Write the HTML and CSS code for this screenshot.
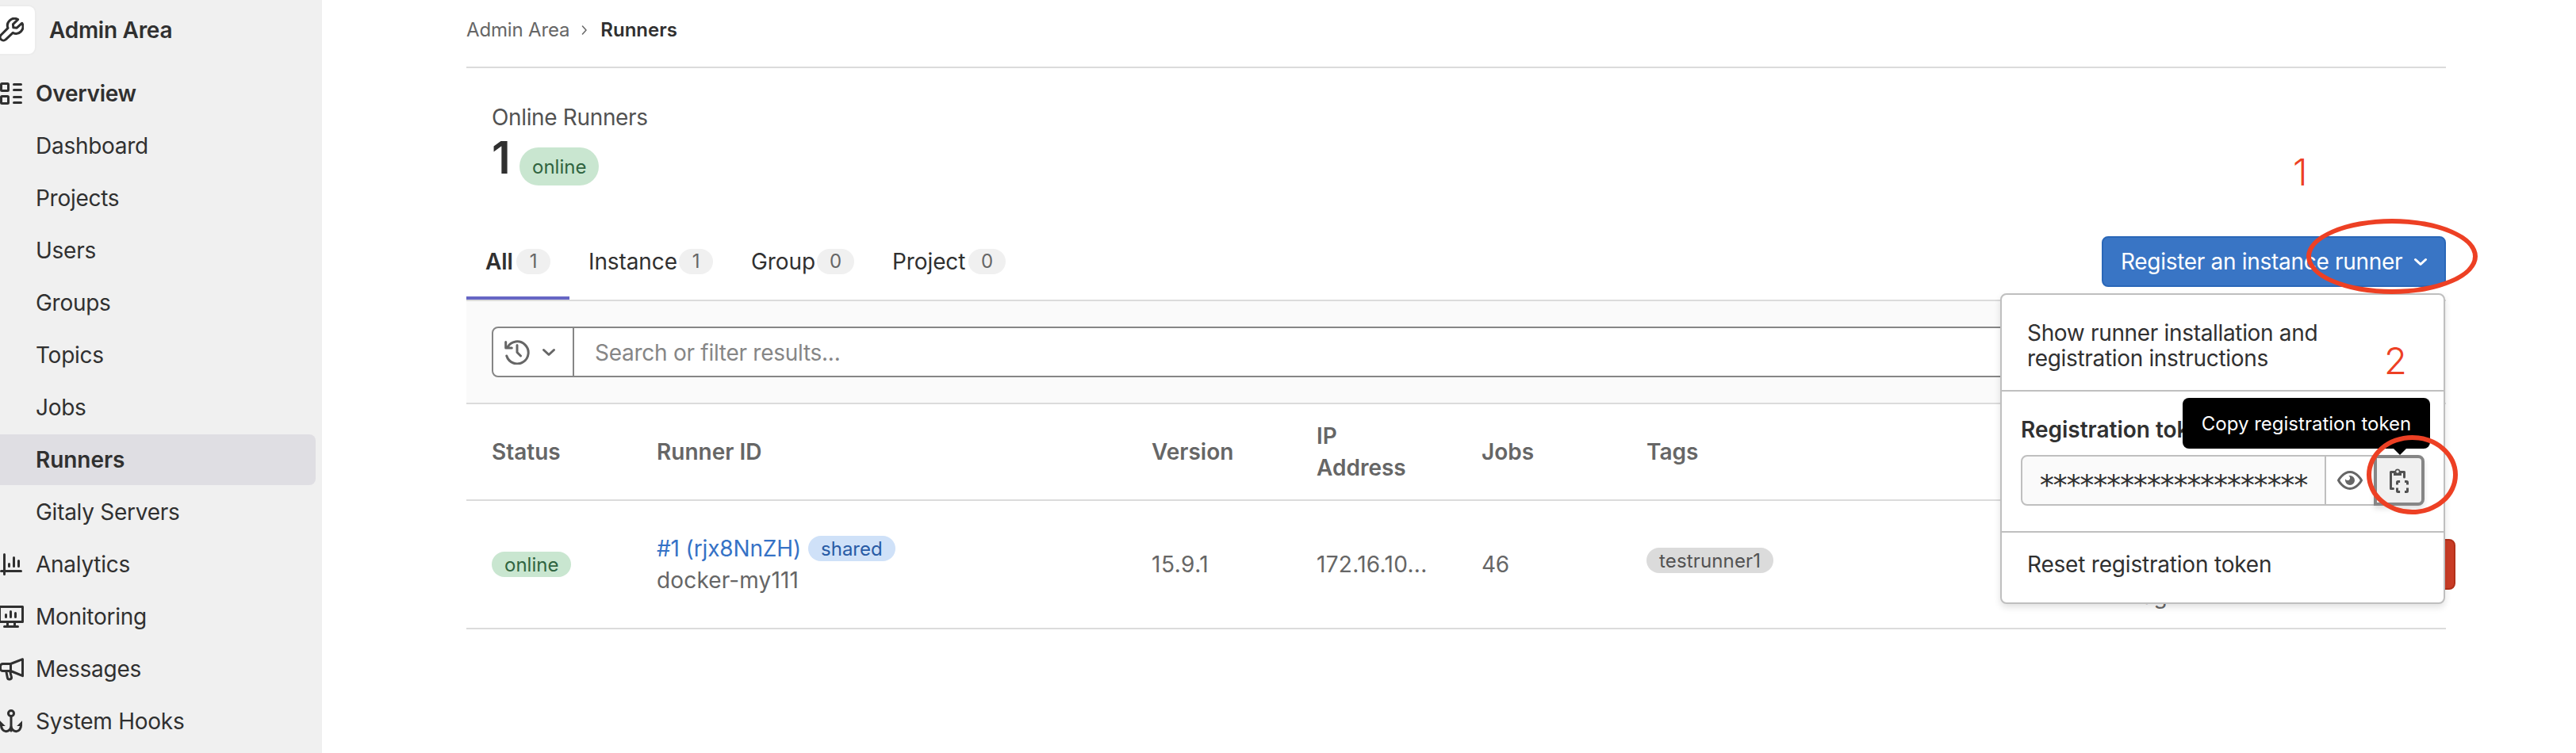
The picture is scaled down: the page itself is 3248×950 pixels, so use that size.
FILE: index.html
```html
<!DOCTYPE html>
<html lang="en">
<head>
    <meta charset="UTF-8">
    <meta name="viewport" content="width=device-width, initial-scale=1.0">
    <title>Runners · Admin Area</title>
    <link rel="stylesheet" href="styles.css">
</head>
<body>
    <aside class="sidebar">
        <div class="context-header">
            <span class="avatar">
                <svg class="icon" viewBox="0 0 16 16"><path d="M12.3 1.3A4.4 4.4 0 0 0 6 6.7L1.7 11a2.05 2.05 0 0 0 2.9 2.9L9.1 9.7A4.4 4.4 0 0 0 14.9 3.6L11.6 6.6 9.4 6.4 9.2 4.3z"/></svg>
            </span>
            <span class="context-title">Admin Area</span>
        </div>
        <nav class="nav">
            <a class="nav-item bold">
                <svg class="icon" viewBox="0 0 16 16"><rect x="1.75" y="1.75" width="4.5" height="4.5" rx=".5"/><rect x="1.75" y="9.75" width="4.5" height="4.5" rx=".5"/><path d="M9.75 2.25h4.5M9.75 5.75h4.5M9.75 10.25h4.5M9.75 13.75h4.5"/></svg>
                <span>Overview</span>
            </a>
            <a class="nav-item sub">Dashboard</a>
            <a class="nav-item sub">Projects</a>
            <a class="nav-item sub">Users</a>
            <a class="nav-item sub">Groups</a>
            <a class="nav-item sub">Topics</a>
            <a class="nav-item sub">Jobs</a>
            <a class="nav-item sub bold active">Runners</a>
            <a class="nav-item sub">Gitaly Servers</a>
            <a class="nav-item">
                <svg class="icon" viewBox="0 0 16 16"><path d="M3.75 1.75v12.5M1.75 12.25h12.5M6.75 7.75v1.5M9.75 3.75v5.5M12.75 5.75v3.5"/></svg>
                <span>Analytics</span>
            </a>
            <a class="nav-item">
                <svg class="icon" viewBox="0 0 16 16"><path d="M.75 1.75h14.5v9.5H.75zM5.75 11.5V14M10.25 11.5V14M3.75 14.25h8.5M4.75 6.75v1.5M7.75 4.75v3.5M10.75 5.75v2.5"/></svg>
                <span>Monitoring</span>
            </a>
            <a class="nav-item">
                <svg class="icon" viewBox="0 0 16 16"><path d="M7.75 4.75h-5a1.5 1.5 0 0 0-1.5 1.5v1.5a1.5 1.5 0 0 0 1.5 1.5h5zM7.75 4.75l7.5-2.9v10.5l-7.5-3.1M4.9 9.5l.8 4a1.2 1.2 0 0 0 2.5-.5l-.9-3.5"/></svg>
                <span>Messages</span>
            </a>
            <a class="nav-item">
                <svg class="icon" viewBox="0 0 16 16"><circle cx="8" cy="3" r="1.75"/><path d="M8 5v9M1.75 10.5a3.125 3.75 0 0 0 6.25.3 3.125 3.75 0 0 0 6.25-.3"/><path class="solid" d="M1 7.6L4.4 11H1zM15 7.6L11.6 11H15z"/></svg>
                <span>System Hooks</span>
            </a>
        </nav>
    </aside>

    <main class="content">
        <div class="breadcrumbs">
            <span>Admin Area</span>
            <svg class="crumb-arrow" viewBox="0 0 8 12"><path d="M1.5 1L6 6l-4.5 5"/></svg>
            <b>Runners</b>
        </div>

        <section class="stats">
            <div class="stat-title">Online Runners</div>
            <div class="stat-row">
                <span class="stat-value">1</span>
                <span class="badge success large">online</span>
            </div>
        </section>

        <div class="tabs">
            <a class="tab tab-all selected">All <span class="count">1</span></a>
            <a class="tab tab-instance">Instance <span class="count">1</span></a>
            <a class="tab tab-group">Group <span class="count wide">0</span></a>
            <a class="tab tab-project">Project <span class="count wide">0</span></a>

            <div class="register">
                <button class="register-btn">
                    <span>Register an instance runner</span>
                    <svg class="chevron" viewBox="0 0 16 9"><path d="M1.5 1.5L8 7.5l6.5-6"/></svg>
                </button>
                <div class="dropdown">
                    <a class="dropdown-item install">Show runner installation and<br>registration instructions</a>
                    <div class="token">
                        <label class="token-label">Registration token</label>
                        <div class="token-group">
                            <span class="token-value">********************</span>
                            <span class="token-eye">
                                <svg class="icon" viewBox="0 0 16 16"><path d="M.75 8S3.5 2.75 8 2.75 15.25 8 15.25 8 12.5 13.25 8 13.25.75 8 .75 8z"/><path class="solid" d="M8 5a3 3 0 1 1-3 3c0-.3.05-.6.15-.9A1.5 1.5 0 1 0 7.1 5.15 3 3 0 0 1 8 5z"/></svg>
                            </span>
                            <button class="token-copy">
                                <svg class="icon" viewBox="0 0 16 16"><path d="M4.5 2.75H2.75v10.5h1.5M9.5 2.75h1.75V6"/><path class="solid" d="M4.5 5V2h.8a1.8 1.8 0 0 1 3.4 0h.8v3z"/><circle class="hole" cx="7" cy="2.5" r=".9"/><path class="dash" d="M6.75 10.8V9.25q0-.5.5-.5h1.3M11.5 8.75h1.25q.5 0 .5.5v1.55M13.25 12.8v1.95q0 .5-.5.5H11.5M8.55 15.25h-1.3q-.5 0-.5-.5V12.8"/></svg>
                            </button>
                        </div>
                        <div class="tooltip">Copy registration token</div>
                    </div>
                    <a class="dropdown-item">Reset registration token</a>
                </div>
            </div>
        </div>

        <div class="filter-bar">
            <div class="search">
                <span class="history">
                    <svg class="icon" viewBox="0 0 16 16"><path d="M1.4 10.5a7 7 0 1 0 .6-5.5M.85 1.7v3.8h3.8M8 3.75v4.5l2.25 2.25"/></svg>
                    <svg class="chevron" viewBox="0 0 16 9"><path d="M1.5 1.5L8 7.5l6.5-6"/></svg>
                </span>
                <span class="search-input">Search or filter results...</span>
            </div>
        </div>

        <div class="runner-table">
            <div class="row head">
                <div>Status</div>
                <div>Runner ID</div>
                <div>Version</div>
                <div>IP Address</div>
                <div>Jobs</div>
                <div>Tags</div>
            </div>
            <div class="row body">
                <div><span class="badge success">online</span></div>
                <div>
                    <div class="runner-name"><a class="link">#1 (rjx8NnZH)</a><span class="badge info">shared</span></div>
                    <div class="runner-desc">docker-my111</div>
                </div>
                <div class="num">15.9.1</div>
                <div class="num ip">172.16.10...</div>
                <div>46</div>
                <div><span class="badge neutral">testrunner1</span></div>
                <div class="contact">ago</div>
                <div class="actions"><button class="delete-btn"></button></div>
            </div>
        </div>
    </main>

    <!-- step markers -->
    <span class="mark mark-1">1</span>
    <span class="mark mark-2">2</span>
    <span class="ring ring-1"></span>
    <span class="ring ring-2"></span>
</body>
</html>
```

FILE: styles.css
```css
* {
    box-sizing: border-box;
}

body {
    margin: 0;
    position: relative;
    display: flex;
    width: 3248px;
    height: 950px;
    overflow: hidden;
    background-color: #ffffff;
    color: #303030;
    font-family: Inter, "Noto Sans", sans-serif;
    font-size: 28px;
    line-height: 40px;
    letter-spacing: -0.27px;
}

button {
    font: inherit;
    letter-spacing: inherit;
    margin: 0;
    padding: 0;
}

.icon {
    display: block;
    flex: none;
    width: 32px;
    height: 32px;
}

.icon,
.chevron,
.crumb-arrow {
    fill: none;
    stroke: currentColor;
    stroke-width: 1.5;
    stroke-linecap: round;
    stroke-linejoin: round;
}

.icon .solid {
    fill: currentColor;
    stroke: none;
}

.icon .hole {
    fill: #f0f0f0;
    stroke: none;
}

.icon .dash {
    stroke-linecap: butt;
}

.chevron {
    flex: none;
    width: 16px;
    height: 9px;
    stroke-width: 3;
    overflow: visible;
}

/* Sidebar */
.sidebar {
    flex: none;
    width: 406px;
    padding-top: 8px;
    background-color: #f0f0f0;
    overflow: hidden;
}

.context-header {
    display: flex;
    align-items: center;
    height: 60px;
    margin-bottom: 18px;
    font-weight: 600;
}

.avatar {
    width: 62px;
    height: 60px;
    margin-left: -18px;
    padding: 14px 0 0 16px;
    border-radius: 8px;
    background-color: #ffffff;
    box-shadow: 0 0 0 2px #ececec;
}

.context-title {
    margin-left: 18px;
}

.nav {
    display: flex;
    flex-direction: column;
    gap: 2px;
}

.nav-item {
    display: flex;
    align-items: center;
    gap: 15px;
    width: 398px;
    height: 64px;
    border-radius: 0 8px 8px 0;
}

.nav-item .icon {
    margin-left: -2px;
}

.nav-item.sub {
    padding-left: 45px;
}

.bold {
    font-weight: 600;
}

.nav-item.active {
    background-color: #dfdee3;
    letter-spacing: -0.06px;
}

/* Content */
.content {
    flex: none;
    width: 2496px;
    margin-left: 182px;
}

.breadcrumbs {
    display: flex;
    align-items: center;
    height: 86px;
    padding-bottom: 9px;
    border-bottom: 2px solid #dbdbdb;
    color: #666666;
    font-size: 24px;
    letter-spacing: -0.16px;
}

.breadcrumbs b {
    color: #303030;
    font-weight: 600;
    letter-spacing: 0;
}

.crumb-arrow {
    width: 8px;
    height: 12px;
    margin: 0 16px 0 15px;
}

.stats {
    height: 196px;
    padding: 42px 32px 0;
}

.stat-title {
    color: #525252;
    letter-spacing: -0.35px;
}

.stat-row {
    display: flex;
    align-items: flex-start;
}

.stat-value {
    width: 35px;
    font-size: 56px;
    font-weight: 600;
    line-height: 62px;
    letter-spacing: 0;
}

.badge {
    display: inline-block;
    height: 32px;
    padding: 0 16px;
    border-radius: 16px;
    font-size: 24px;
    line-height: 33px;
    letter-spacing: 0;
}

.badge.success {
    background-color: #c9e6d0;
    color: #306440;
}

.badge.info {
    margin-left: 9px;
    background-color: #cfe1f8;
    color: #285ba5;
}

.badge.neutral {
    background-color: #dbdbdb;
    color: #525252;
    letter-spacing: 0.15px;
}

.badge.large {
    height: 48px;
    margin-top: 18px;
    border-radius: 24px;
    line-height: 49px;
}

/* Tabs */
.tabs {
    display: flex;
    height: 98px;
    border-bottom: 2px solid #dbdbdb;
}

.tab {
    display: flex;
    align-items: center;
    justify-content: space-between;
    padding: 4px 24px 0;
    border-bottom: 4px solid transparent;
    letter-spacing: -0.1px;
}

.tab-all {
    width: 130px;
}

.tab-instance {
    width: 205px;
}

.tab-group {
    width: 178px;
}

.tab-project {
    width: 191px;
}

.tab.selected {
    border-bottom-color: #6666c4;
    font-weight: 600;
}

.count {
    width: 43px;
    height: 32px;
    border-radius: 16px;
    background-color: #f0f0f0;
    color: #666666;
    font-size: 24px;
    font-weight: 400;
    line-height: 32px;
    text-align: center;
}

.count.wide {
    width: 47px;
}

/* Register dropdown */
.register {
    position: relative;
    margin: 16px 0 0 auto;
}

.register-btn {
    display: flex;
    align-items: center;
    justify-content: space-between;
    width: 434px;
    height: 64px;
    padding: 0 22px;
    border: 2px solid #2a67b8;
    border-radius: 8px;
    background-color: #3975c5;
    color: #ffffff;
    letter-spacing: -0.3px;
}

.dropdown {
    position: absolute;
    top: 72px;
    right: 1px;
    z-index: 2;
    width: 561px;
    height: 392px;
    border: 2px solid #bfbfbf;
    border-radius: 8px;
    background-color: #ffffff;
    box-shadow: 0 4px 8px rgba(0, 0, 0, 0.12);
}

.dropdown-item {
    display: block;
    padding: 20px 32px;
    line-height: 40px;
    letter-spacing: -0.2px;
}

.dropdown-item.install {
    height: 120px;
    padding-top: 32px;
    line-height: 32px;
    letter-spacing: -0.33px;
}

.token {
    position: relative;
    height: 180px;
    padding: 26px 24px 0;
    border-top: 2px solid #bfbfbf;
    border-bottom: 2px solid #bfbfbf;
}

.token-label {
    display: block;
    height: 54px;
    line-height: 44px;
    font-weight: 600;
    letter-spacing: 0;
}

.token-group {
    display: flex;
    width: 509px;
    height: 64px;
}

.token-value {
    width: 385px;
    padding-left: 20px;
    border: 2px solid #bfbfbf;
    border-radius: 8px 0 0 8px;
    background-color: #fafafa;
    font-family: "DejaVu Sans Mono", monospace;
    font-size: 36px;
    line-height: 72px;
    letter-spacing: -4.81px;
}

.token-eye {
    width: 60px;
    padding: 14px 0 0 14px;
    border-top: 2px solid #bfbfbf;
    border-bottom: 2px solid #bfbfbf;
    color: #666666;
}

.token-copy {
    width: 64px;
    padding: 0 0 0 12px;
    border: 4px solid #868686;
    border-radius: 0 8px 8px 0;
    background-color: #f0f0f0;
    color: #525252;
    box-shadow: 0 4px 6px rgba(0, 0, 0, 0.12);
}

.tooltip {
    position: absolute;
    top: 8px;
    right: 17px;
    width: 312px;
    height: 64px;
    border-radius: 8px;
    background-color: #000000;
    color: #ffffff;
    font-size: 24px;
    line-height: 65px;
    letter-spacing: 0;
    text-align: center;
}

.tooltip::after {
    content: "";
    position: absolute;
    top: 64px;
    left: 266px;
    border: 8px solid transparent;
    border-top-color: #000000;
    border-bottom: 0;
}

/* Filter */
.filter-bar {
    height: 130px;
    padding: 32px;
    border-bottom: 2px solid #dbdbdb;
    background-color: #fafafa;
}

.search {
    display: flex;
    height: 64px;
    border: 2px solid #868686;
    border-radius: 8px;
    background-color: #ffffff;
}

.history {
    display: flex;
    align-items: center;
    gap: 16px;
    width: 102px;
    padding-left: 14px;
    border-right: 2px solid #868686;
    color: #666666;
}

.search-input {
    padding-left: 26px;
    color: #868686;
    line-height: 62px;
}

/* Table */
.row {
    display: grid;
    grid-template-columns: 208px 624px 208px 208px 208px 624px 208px 208px;
    align-items: center;
    border-bottom: 2px solid #dbdbdb;
    color: #666666;
}

.row > div {
    padding: 0 32px;
    white-space: nowrap;
}

.row.head {
    height: 122px;
    font-weight: 600;
    letter-spacing: 0;
}

.row.head > div {
    white-space: normal;
}

.row.body {
    height: 162px;
}

.runner-name {
    display: flex;
    align-items: center;
}

.row .badge {
    display: block;
    width: max-content;
}

.link {
    color: #3572c6;
    letter-spacing: -0.14px;
}

.runner-desc {
    letter-spacing: 0.15px;
}

.num {
    letter-spacing: 0.5px;
}

.num.ip {
    letter-spacing: 0.3px;
}

.badge.neutral {
    margin-top: -10px;
}

.row > .contact {
    padding-top: 80px;
}

.delete-btn {
    display: block;
    width: 188px;
    height: 64px;
    border: 2px solid #b23019;
    border-radius: 8px;
    background-color: #c93c26;
}

/* Markers */
.mark,
.ring {
    position: absolute;
    z-index: 3;
    color: #ed4024;
}

.mark {
    font-size: 47px;
    font-weight: 300;
    line-height: 48px;
}

.mark-1 {
    left: 2891px;
    top: 193px;
}

.mark-2 {
    left: 3006px;
    top: 431px;
}

.ring {
    border: 6px solid #ed4024;
    border-radius: 50%;
}

.ring-1 {
    left: 2908px;
    top: 276px;
    width: 216px;
    height: 95px;
}

.ring-2 {
    left: 2984px;
    top: 549px;
    width: 115px;
    height: 100px;
}
```
